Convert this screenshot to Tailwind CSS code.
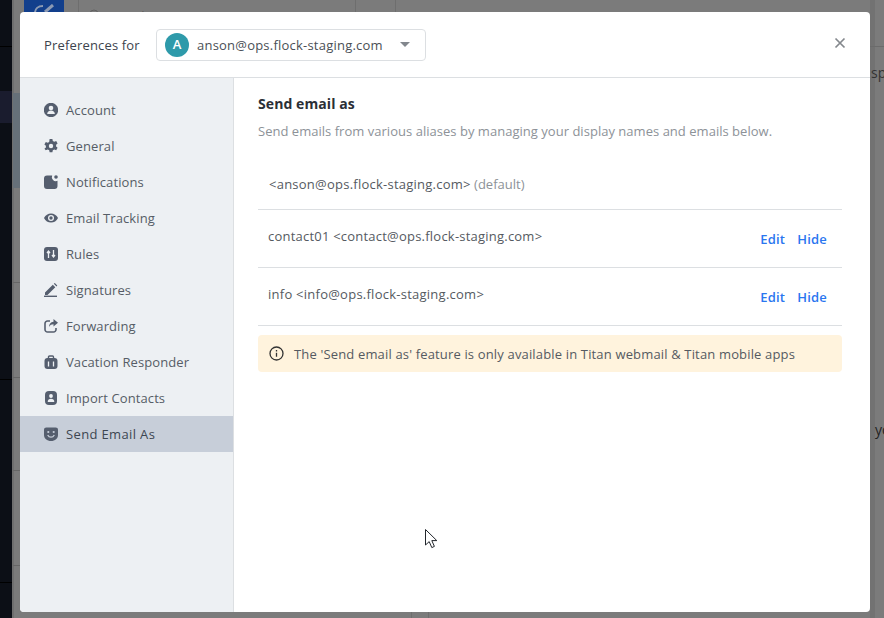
<!doctype html>
<html>
<head>
<meta charset="utf-8">
<script src="https://cdn.jsdelivr.net/npm/@tailwindcss/browser@4"></script>
</head>
<body class="m-0">
<div class="relative w-[884px] h-[618px] overflow-hidden bg-[#7b7b7b] font-['Open_Sans','Noto_Sans',sans-serif]">
  <!-- dimmed app behind -->
  <div class="absolute left-0 top-0 w-[12px] h-[618px] bg-[#0c0f16]">
    <div class="absolute left-0 top-[91px] w-[12px] h-[32px] bg-[#1a1c2e]"></div>
    <div class="absolute left-0 top-[46px] w-[12px] h-px bg-black"></div>
    <div class="absolute left-0 top-[379px] w-[12px] h-px bg-black"></div>
    <div class="absolute left-0 top-[582px] w-[12px] h-px bg-black"></div>
  </div>
  <div class="absolute left-[12px] top-0 w-[2px] h-[618px] bg-[#6f6f6f]"></div>
  <div class="absolute left-[13px] top-[93px] w-[7px] h-[95px] bg-[#667079]"></div>
  <div class="absolute left-[13px] top-[282px] w-[7px] h-px bg-[#666]"></div>
  <div class="absolute left-[13px] top-[377px] w-[7px] h-px bg-[#666]"></div>
  <div class="absolute left-[13px] top-[470px] w-[7px] h-px bg-[#666]"></div>
  <div class="absolute left-[13px] top-[565px] w-[7px] h-px bg-[#666]"></div>
  <div class="absolute left-[24px] top-0 w-[40px] h-[12px] bg-[#123f8c]">
    <svg class="absolute left-[10px] top-[4px]" width="22" height="8" viewBox="0 0 22 8" fill="none" stroke="#8c9ab3" stroke-width="2"><path d="M1 9c0-4 3-7 8-7"/><path d="M11 8l8-7" stroke-width="3"/></svg>
  </div>
  <div class="absolute left-[78px] top-0 w-px h-[12px] bg-[#6e6e6e]"></div>
  <svg class="absolute left-[89px] top-[9px]" width="10" height="4" viewBox="0 0 10 4" fill="none" stroke="#606060"><circle cx="5" cy="5" r="4"/></svg>
  <div class="absolute left-[108px] top-[7px] text-[13px] leading-[18px] text-[#5a5a5a]">Search</div>
  <div class="absolute left-[355px] top-0 w-px h-[12px] bg-[#6e6e6e]"></div>
  <div class="absolute left-[395px] top-0 w-px h-[12px] bg-[#6e6e6e]"></div>
  <div class="absolute left-[411px] top-[612px] w-px h-[6px] bg-[#6e6e6e]"></div>
  <div class="absolute left-[428px] top-[612px] w-px h-[6px] bg-[#6e6e6e]"></div>
  <div class="absolute left-[870px] top-0 w-[5px] h-[618px] bg-[#727272]"></div>
  <div class="absolute left-[870px] top-[46px] w-[14px] h-px bg-[#6b6b6b]"></div>
  <div class="absolute left-[871px] top-[64px] text-[14px] leading-[18px] text-[#333]">sp</div>
  <div class="absolute left-[875px] top-[421px] text-[14px] leading-[18px] text-[#222]">yo</div>

  <!-- modal -->
  <div class="absolute left-[20px] top-[12px] w-[850px] h-[600px] bg-white rounded-[4px] overflow-hidden flex flex-col">
    <header class="h-[66px] shrink-0 border-b border-[#dcdfe2] flex items-center pl-[24px] pr-[24px]">
      <span class="text-[13px] font-medium text-[#3c434d] w-[112px] pt-[2px] tracking-[0.17px]">Preferences for</span>
      <div class="w-[270px] h-[32px] border border-[#dcdfe2] rounded-[4px] flex items-center pl-[8px] pr-[15px]">
        <span class="w-[24px] h-[24px] rounded-full bg-[#2e9aaa] text-white text-[13px] font-semibold flex items-center justify-center">A</span>
        <span class="ml-[8px] pt-[2px] text-[13px] text-[#4a4f56] tracking-[0.22px]">anson@ops.flock-staging.com</span>
        <svg class="ml-auto" width="10" height="5" viewBox="0 0 10 5"><path d="M0 0h10L5 5z" fill="#82878d"/></svg>
      </div>
      <svg class="ml-auto mb-[4px]" width="12" height="12" viewBox="0 0 12 12" fill="none" stroke="#84888d" stroke-width="1.700"><path d="M1.500 1.500l9 9M10.500 1.500l-9 9"/></svg>
    </header>
    <div class="flex-1 flex min-h-0">
      <nav class="w-[214px] shrink-0 bg-[#edf0f3] border-r border-[#dcdfe2] pt-[14px] text-[13px] text-[#565d66] tracking-[0.1px]">
        <div class="h-[36px] flex items-center pl-[24px] gap-[8px]">
          <svg width="14" height="14" viewBox="0 0 14 14"><circle cx="7" cy="7" r="7.200" fill="#555e6e"/><circle cx="7" cy="5" r="2.300" fill="#edf0f3"/><path d="M3.200 11c0-2.400 1.700-3.600 3.800-3.600s3.800 1.200 3.800 3.600z" fill="#edf0f3"/></svg>
          <span class="pt-[2px]">Account</span>
        </div>
        <div class="h-[36px] flex items-center pl-[24px] gap-[8px]">
          <svg width="14" height="14" viewBox="0 0 14 14"><path d="M5.600 0h2.800l.4 2 1.500.8 1.900-.7 1.400 2.400-1.500 1.300v1.700l1.500 1.300-1.400 2.400-1.900-.7-1.500.8-.4 2H5.600l-.4-2-1.500-.8-1.900.7L.4 9.800l1.500-1.300V6.800L.4 5.500l1.400-2.400 1.900.7 1.500-.8z" fill="#555e6e"/><circle cx="7" cy="7" r="2.200" fill="#edf0f3"/></svg>
          <span class="pt-[2px]">General</span>
        </div>
        <div class="h-[36px] flex items-center pl-[24px] gap-[8px]">
          <svg width="14" height="14" viewBox="0 0 14 14"><path d="M3 .500h5.200a4 4 0 0 0 5.300 5.300V11a3 3 0 0 1-3 3H3a3 3 0 0 1-3-3V3.500a3 3 0 0 1 3-3z" fill="#555e6e"/><circle cx="12" cy="2" r="1.800" fill="#555e6e"/></svg>
          <span class="pt-[2px]">Notifications</span>
        </div>
        <div class="h-[36px] flex items-center pl-[24px] gap-[8px]">
          <svg width="14" height="14" viewBox="0 0 14 14"><path d="M0 7c1.500-3 4-4.500 7-4.500S12.500 4 14 7c-1.500 3-4 4.500-7 4.500S1.500 10 0 7z" fill="#555e6e"/><circle cx="7" cy="7" r="3" fill="#edf0f3"/><circle cx="7" cy="7" r="1.700" fill="#555e6e"/></svg>
          <span class="pt-[2px]">Email Tracking</span>
        </div>
        <div class="h-[36px] flex items-center pl-[24px] gap-[8px]">
          <svg width="14" height="14" viewBox="0 0 14 14"><rect x="0" y="0" width="14" height="14" rx="3" fill="#555e6e"/><path d="M4.500 11V5M3 6l1.500-2L6 6M9.500 3v6M8 8l1.500 2L11 8" stroke="#edf0f3" stroke-width="1.300" fill="none"/></svg>
          <span class="pt-[2px]">Rules</span>
        </div>
        <div class="h-[36px] flex items-center pl-[24px] gap-[8px]">
          <svg width="14" height="14" viewBox="0 0 14 14"><path d="M1 9.500 8.800 1.700l2.500 2.500L3.500 12H1zM9.800.7l1-.7 2.500 2.500-.8 1z" fill="#555e6e"/><rect x="0" y="12.600" width="13" height="1.400" fill="#555e6e"/></svg>
          <span class="pt-[2px]">Signatures</span>
        </div>
        <div class="h-[36px] flex items-center pl-[24px] gap-[8px]">
          <svg width="14" height="14" viewBox="0 0 14 14"><path d="M6 2H3.500A2.500 2.500 0 0 0 1 4.500v6A2.500 2.500 0 0 0 3.500 13h6a2.500 2.500 0 0 0 2.500-2.500V9" fill="none" stroke="#555e6e" stroke-width="1.600"/><path d="M9.500 0 14 3.700 9.500 7.400V5.300C7.500 5.300 6 6 5 8c0-3 1.500-5 4.500-5.300z" fill="#555e6e"/></svg>
          <span class="pt-[2px]">Forwarding</span>
        </div>
        <div class="h-[36px] flex items-center pl-[24px] gap-[8px]">
          <svg width="14" height="14" viewBox="0 0 14 14"><rect x="0.500" y="3" width="13" height="11" rx="3" fill="#555e6e"/><path d="M4.500 3.500V2a1 1 0 0 1 1-1h3a1 1 0 0 1 1 1v1.500" fill="none" stroke="#555e6e" stroke-width="1.400"/><path d="M4.500 6.500v5M9.500 6.500v5" stroke="#edf0f3" stroke-width="1.300"/></svg>
          <span class="pt-[2px]">Vacation Responder</span>
        </div>
        <div class="h-[36px] flex items-center pl-[24px] gap-[8px]">
          <svg width="14" height="14" viewBox="0 0 14 14"><rect x="1" y="0" width="12" height="14" rx="4" fill="#555e6e"/><circle cx="7" cy="5" r="1.900" fill="#edf0f3"/><path d="M3.700 11c0-2.200 1.400-3.300 3.300-3.300s3.300 1.100 3.300 3.300z" fill="#edf0f3"/></svg>
          <span class="pt-[2px]">Import Contacts</span>
        </div>
        <div class="h-[36px] flex items-center pl-[24px] gap-[8px] bg-[#c7ced9] text-[#3d4651] font-medium tracking-[0.36px]">
          <svg width="14" height="14" viewBox="0 0 14 14"><path d="M0 2.500C0 1.200 1 .500 2.300.500h9.400C13 .500 14 1.200 14 2.500V8c0 3.500-3 6-7 6s-7-2.500-7-6z" fill="#555e6e"/><circle cx="4.300" cy="5" r="1.100" fill="#c7ced9"/><circle cx="9.700" cy="5" r="1.100" fill="#c7ced9"/><path d="M3.700 8c.8 1.500 2 2.200 3.300 2.200S9.500 9.500 10.300 8" fill="none" stroke="#c7ced9" stroke-width="1.300"/></svg>
          <span class="pt-[2px]">Send Email As</span>
        </div>
      </nav>
      <main class="flex-1 min-w-0 pl-[24px] pr-[28px] pt-[15px]">
        <h2 class="text-[14px] leading-[22px] font-bold text-[#2b2f36] tracking-[0.08px]">Send email as</h2>
        <p class="mt-[7px] text-[13px] leading-[18px] text-[#8d9298] tracking-[0.025px]">Send emails from various aliases by managing your display names and emails below.</p>
        <div class="mt-[14px] h-[56px] border-b border-[#dcdfe2] pl-[11px] pt-[21px] text-[13px] leading-[18px] text-[#555a61]"><span class="tracking-[0.24px]">&lt;anson@ops.flock-staging.com&gt;</span> <span class="text-[#8d9298]">(default)</span></div>
        <div class="h-[58px] border-b border-[#dcdfe2] flex pl-[10px] pr-[15px] text-[13px] leading-[18px] text-[#555a61]">
          <span class="mt-[17px] tracking-[0.22px]">contact01 &lt;contact@ops.flock-staging.com&gt;</span>
          <span class="ml-auto mt-[20px] flex gap-[12px] font-semibold text-[#2a76f0] tracking-[0.2px]"><span>Edit</span><span>Hide</span></span>
        </div>
        <div class="h-[58px] border-b border-[#dcdfe2] flex pl-[10px] pr-[15px] text-[13px] leading-[18px] text-[#555a61]">
          <span class="mt-[17px] tracking-[0.25px]">info &lt;info@ops.flock-staging.com&gt;</span>
          <span class="ml-auto mt-[20px] flex gap-[12px] font-semibold text-[#2a76f0] tracking-[0.2px]"><span>Edit</span><span>Hide</span></span>
        </div>
        <div class="mt-[9px] h-[37px] rounded-[4px] bg-[#fff3dd] flex items-center pl-[11px] gap-[10px] text-[13px] text-[#555a61]">
          <svg width="15" height="15" viewBox="0 0 15 15" fill="none" stroke="#333" stroke-width="1.300"><circle cx="7.500" cy="7.500" r="6.500"/><path d="M7.500 6.800v4M7.500 4v1.400"/></svg>
          <span class="pt-[2px] tracking-[0.157px]">The 'Send email as' feature is only available in Titan webmail &amp; Titan mobile apps</span>
        </div>
      </main>
    </div>
    <svg class="absolute left-[405px] top-[517px]" width="14" height="20" viewBox="0 0 14 20"><path d="M.5.500v15.500l3.700-3.400 2.600 6 2.600-1.200-2.600-5.800h5z" fill="#fff" stroke="#22262c" stroke-width="1"/></svg>
  </div>
</div>
</body>
</html>
